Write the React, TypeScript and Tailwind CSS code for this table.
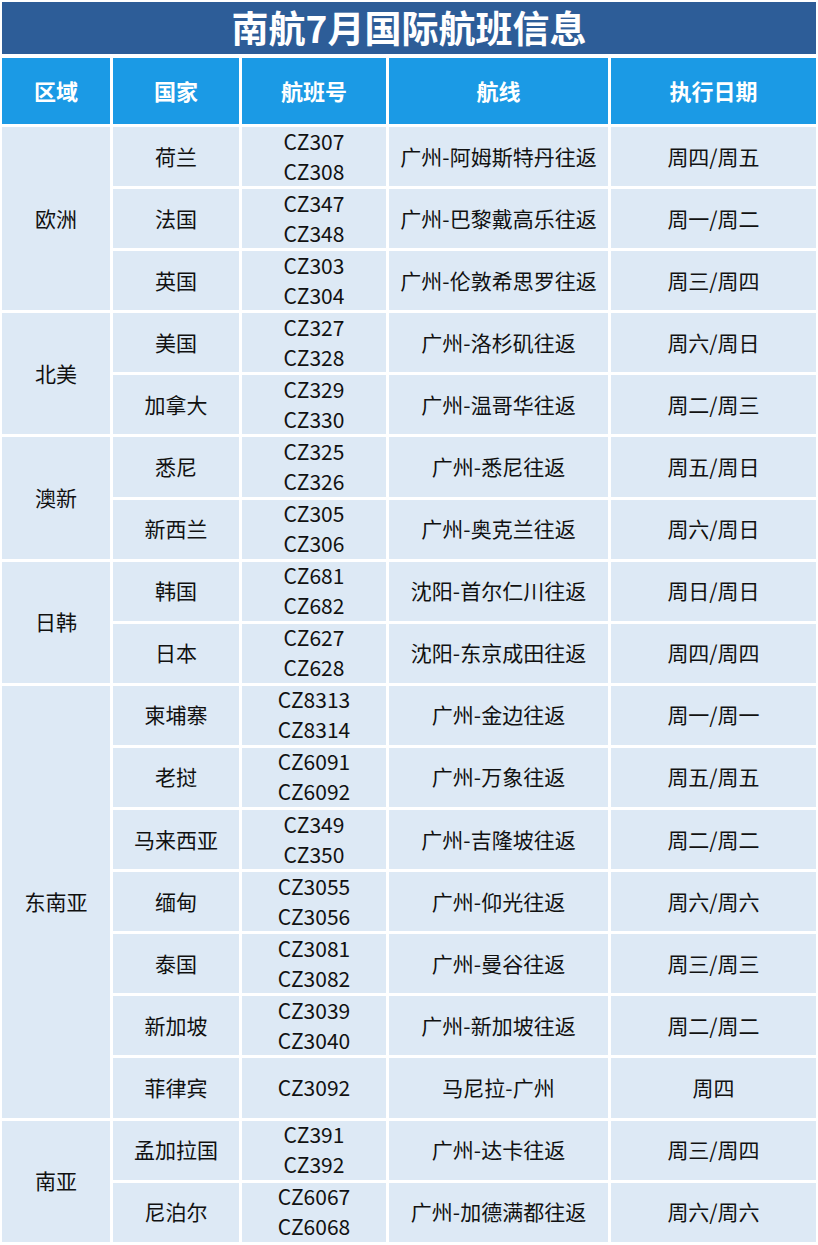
import React from "react";

type Row = { country: string; flights: string[]; route: string; days: string };
type Group = { region: string; rows: Row[] };

const groups: Group[] = [
  {
    region: "欧洲",
    rows: [
      { country: "荷兰", flights: ["CZ307", "CZ308"], route: "广州-阿姆斯特丹往返", days: "周四/周五" },
      { country: "法国", flights: ["CZ347", "CZ348"], route: "广州-巴黎戴高乐往返", days: "周一/周二" },
      { country: "英国", flights: ["CZ303", "CZ304"], route: "广州-伦敦希思罗往返", days: "周三/周四" },
    ],
  },
  {
    region: "北美",
    rows: [
      { country: "美国", flights: ["CZ327", "CZ328"], route: "广州-洛杉矶往返", days: "周六/周日" },
      { country: "加拿大", flights: ["CZ329", "CZ330"], route: "广州-温哥华往返", days: "周二/周三" },
    ],
  },
  {
    region: "澳新",
    rows: [
      { country: "悉尼", flights: ["CZ325", "CZ326"], route: "广州-悉尼往返", days: "周五/周日" },
      { country: "新西兰", flights: ["CZ305", "CZ306"], route: "广州-奥克兰往返", days: "周六/周日" },
    ],
  },
  {
    region: "日韩",
    rows: [
      { country: "韩国", flights: ["CZ681", "CZ682"], route: "沈阳-首尔仁川往返", days: "周日/周日" },
      { country: "日本", flights: ["CZ627", "CZ628"], route: "沈阳-东京成田往返", days: "周四/周四" },
    ],
  },
  {
    region: "东南亚",
    rows: [
      { country: "柬埔寨", flights: ["CZ8313", "CZ8314"], route: "广州-金边往返", days: "周一/周一" },
      { country: "老挝", flights: ["CZ6091", "CZ6092"], route: "广州-万象往返", days: "周五/周五" },
      { country: "马来西亚", flights: ["CZ349", "CZ350"], route: "广州-吉隆坡往返", days: "周二/周二" },
      { country: "缅甸", flights: ["CZ3055", "CZ3056"], route: "广州-仰光往返", days: "周六/周六" },
      { country: "泰国", flights: ["CZ3081", "CZ3082"], route: "广州-曼谷往返", days: "周三/周三" },
      { country: "新加坡", flights: ["CZ3039", "CZ3040"], route: "广州-新加坡往返", days: "周二/周二" },
      { country: "菲律宾", flights: ["CZ3092"], route: "马尼拉-广州", days: "周四" },
    ],
  },
  {
    region: "南亚",
    rows: [
      { country: "孟加拉国", flights: ["CZ391", "CZ392"], route: "广州-达卡往返", days: "周三/周四" },
      { country: "尼泊尔", flights: ["CZ6067", "CZ6068"], route: "广州-加德满都往返", days: "周六/周六" },
    ],
  },
];

const spanClass: Record<number, string> = {
  2: "row-span-2",
  3: "row-span-3",
  7: "row-span-7",
};

const cell = "bg-[#dde9f5] flex items-center justify-center text-center text-[21px] leading-[30px] text-[#111] pb-[2px]";
const head = "bg-[#1b9ae5] flex items-center justify-center text-white font-bold text-[22px] pb-[2px]";

export default function App() {
  return (
    <div
      className="w-[818px] h-[1245px] bg-white p-[2px] overflow-hidden"
      style={{ fontFamily: '"Noto Sans CJK SC", "Noto Sans", sans-serif' }}
    >
      <div className="h-[52px] bg-[#2d5d98] flex items-center justify-center text-white font-bold text-[37px] leading-none pb-[2px]">
        南航7月国际航班信息
      </div>
      <div className="mt-[4px] grid grid-cols-[108px_126px_144px_219px_205px] grid-rows-[66px] auto-rows-[59.1px] gap-[3px]">
        <div className={head}>区域</div>
        <div className={head}>国家</div>
        <div className={head}>航班号</div>
        <div className={head}>航线</div>
        <div className={head}>执行日期</div>
        {groups.map((g) => (
          <React.Fragment key={g.region}>
            <div className={`${cell} ${spanClass[g.rows.length]} col-start-1`}>{g.region}</div>
            {g.rows.map((r) => (
              <React.Fragment key={r.country}>
                <div className={`${cell} col-start-2`}>{r.country}</div>
                <div className={`${cell} col-start-3 flex-col`}>
                  {r.flights.map((f) => (
                    <div key={f}>{f}</div>
                  ))}
                </div>
                <div className={`${cell} col-start-4`}>{r.route}</div>
                <div className={`${cell} col-start-5`}>{r.days}</div>
              </React.Fragment>
            ))}
          </React.Fragment>
        ))}
      </div>
    </div>
  );
}
